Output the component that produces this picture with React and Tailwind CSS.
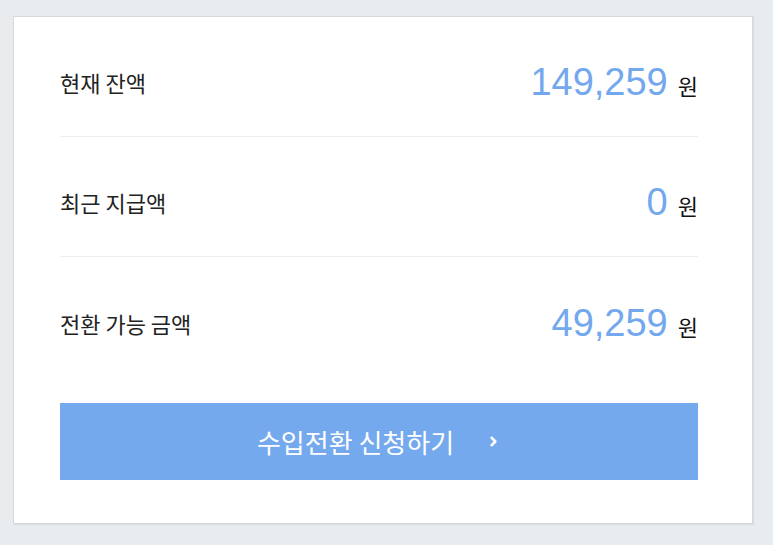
import { ChevronRight } from "lucide-react";

const rows = [
  { label: "현재 잔액", amount: "149,259" },
  { label: "최근 지급액", amount: "0" },
  { label: "전환 가능 금액", amount: "49,259" },
];

export default function App() {
  return (
    <div
      className="min-h-[545px] w-full bg-[#e8ecef] pl-[13px] pt-[16px]"
      style={{ fontFamily: '"Liberation Sans", "Noto Sans CJK KR", sans-serif' }}
    >
      <div className="w-[740px] h-[508px] bg-white border border-[#d5d9dc] shadow-[1px_1px_1px_rgba(0,0,0,0.06)] pl-[46px] pr-[54px]">
        {rows.map((r, i) => (
          <div
            key={r.label}
            className={`h-[120px] pt-[12px] flex items-center justify-between ${
              i < rows.length - 1 ? "border-b border-[#eceef1]" : ""
            }`}
          >
            <span className="text-[22px] text-[#222] font-['Noto_Sans_CJK_KR']">{r.label}</span>
            <span className="flex items-baseline">
              <span className="text-[38px] text-[#74a8ee] font-['Liberation_Sans'] leading-none">
                {r.amount}
              </span>
              <span className="ml-[10px] text-[22px] text-[#111] font-['Noto_Sans_CJK_KR']">원</span>
            </span>
          </div>
        ))}
        <button className="mt-[26px] w-full h-[77px] bg-[#75a9ee] text-white flex items-center justify-center gap-[32px]">
          <span className="text-[26px] font-['Noto_Sans_CJK_KR']">수입전환 신청하기</span>
          <ChevronRight className="w-[15px] h-[15px]" strokeWidth={4} />
        </button>
      </div>
    </div>
  );
}
